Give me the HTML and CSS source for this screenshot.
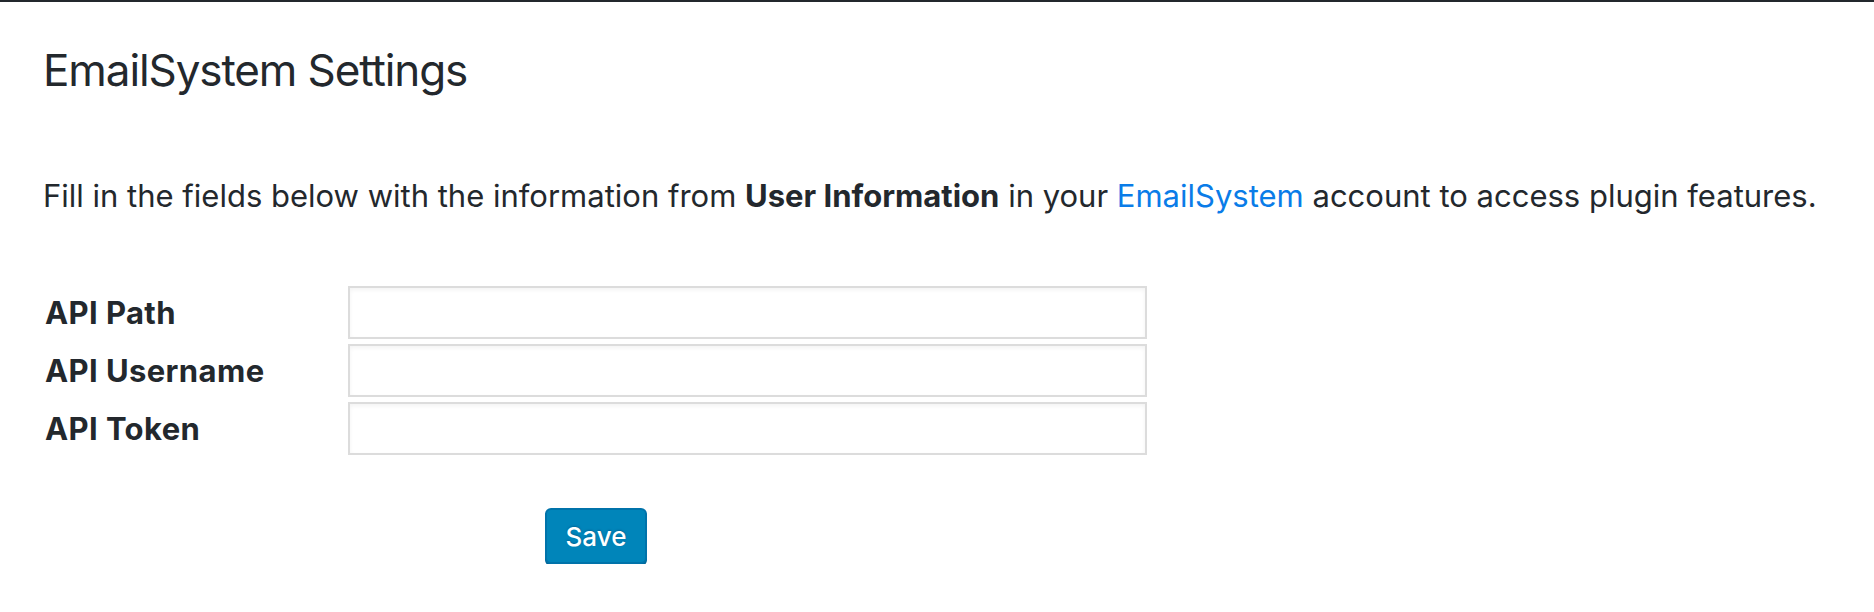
FILE: index.html
```html
<!DOCTYPE html>
<html lang="en">
<head>
    <meta charset="UTF-8">
    <title>EmailSystem Settings</title>
    <link rel="stylesheet" href="styles.css">
</head>
<body>
    <div class="wrap">
        <h1>EmailSystem Settings</h1>

        <p class="intro">Fill in the fields below with the information from <strong>User Information</strong> in your <a href="#">EmailSystem</a> account to access plugin features.</p>

        <form class="settings">
            <div class="form-table">
                <label for="api_path">API Path</label>
                <input type="text" id="api_path">

                <label for="api_user">API Username</label>
                <input type="text" id="api_user">

                <label for="api_token">API Token</label>
                <input type="text" id="api_token">
            </div>

            <div class="submit">
                <button type="button" class="button-primary">Save</button>
            </div>
        </form>
    </div>
</body>
</html>
```

FILE: styles.css
```css
* {box-sizing: border-box; margin: 0; padding: 0;}
body {
    background: #fff;
    color: #23282d;
    font-family: Inter, "Liberation Sans", sans-serif;
    border-top: 2px solid #23282d;
}

.wrap {padding: 0 43px;}

h1 {
    font-size: 44px;
    font-weight: 400;
    line-height: 60px;
    margin-top: 38px;
    letter-spacing: -1.1px;
}

.intro {
    font-size: 31px;
    line-height: 44px;
    margin-top: 74px;
    letter-spacing: 0;
}
.intro strong {font-weight: 700;}
.intro a {color: #0a7ce8; text-decoration: none;}

.settings {margin-top: 68px;}

.form-table {
    display: grid;
    grid-template-columns: 305px 799px;
    row-gap: 5px;
    align-items: center;
}

.form-table label {
    padding-left: 2px;
    font-size: 31px;
    font-weight: 700;
    line-height: 44px;
    letter-spacing: 0.4px;
}

.form-table input {
    height: 53px;
    border: 2px solid #dcdcdc;
    background: #fff;
    box-shadow: inset 0 2px 4px rgba(0, 0, 0, 0.05);
    font-size: 28px;
    padding: 0 12px;
}

.submit {
    margin-top: 53px;
    padding-left: 502px;
}

.button-primary {
    width: 102px;
    height: 56px;
    background: #0085ba;
    border: 2px solid #0073aa;
    border-radius: 6px;
    box-shadow: 0 2px 0 #006799;
    color: #fff;
    font-family: Inter, "Liberation Sans", sans-serif;
    font-size: 26px;
    font-weight: 500;
    text-shadow: 0 -1px 2px #006799;
}
```
